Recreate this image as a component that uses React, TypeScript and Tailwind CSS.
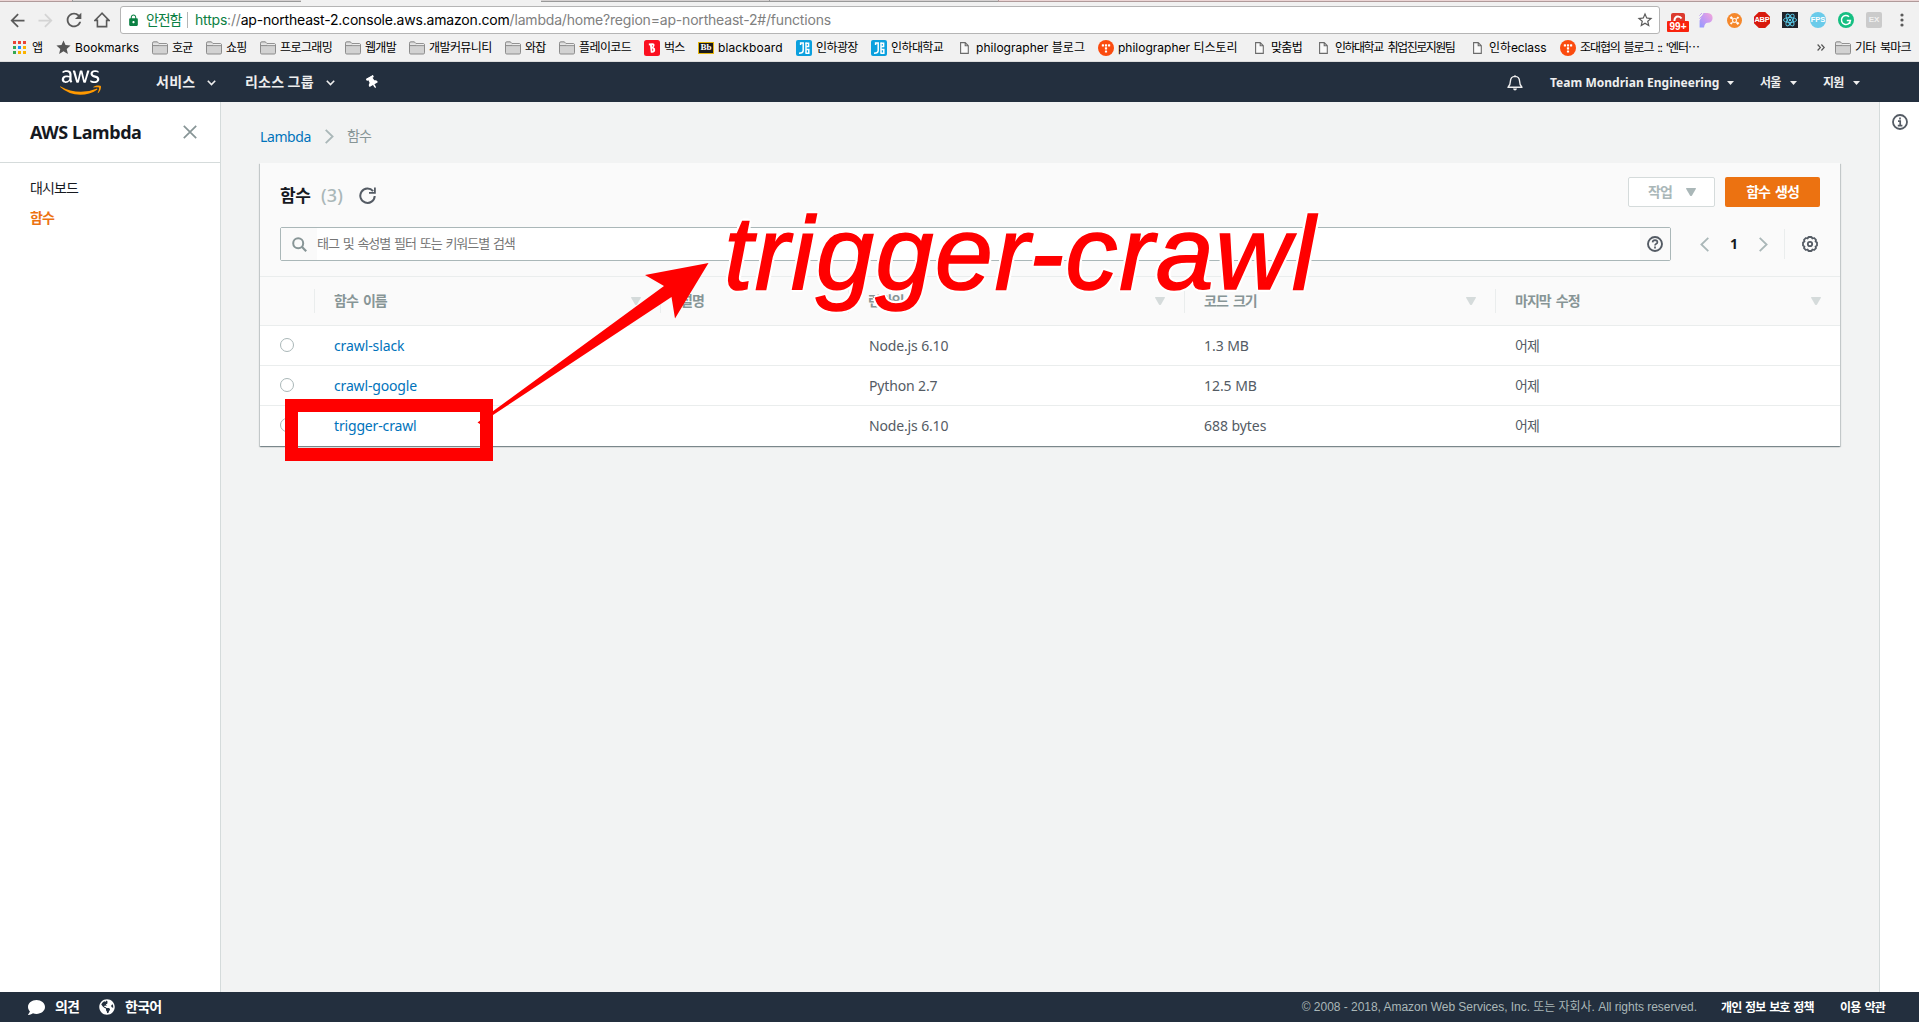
import type { ReactNode } from "react";
import { MdArrowBack, MdArrowForward, MdRefresh, MdStarBorder, MdStar, MdLock } from "react-icons/md";
import { FaAws, FaThumbtack, FaComment, FaGlobeAmericas } from "react-icons/fa";

const KR = "font-['Noto_Sans_CJK_KR',sans-serif]";
const UI = "font-['Inter','Noto_Sans_CJK_KR',sans-serif]";
const CONSOLE = "font-['Noto_Sans','Noto_Sans_CJK_KR',sans-serif]";

/* ---------- small icons ---------- */

const FolderIcon = () => (
  <svg className="h-[14px] w-4 shrink-0" viewBox="0 0 16 14">
    <path d="M.5 2.2Q.5.8 1.8.8H5.4L6.8 2.6H14.2Q15.5 2.6 15.5 3.9V11.8Q15.5 13 14.3 13H1.7Q.5 13 .5 11.8Z" fill="#d2d2d2" stroke="#8c8c8c" />
    <path d="M1 4.6H15" stroke="#8c8c8c" />
    <path d="M1 3.1H6.6L7.3 3.6H15" stroke="#f1f1f1" fill="none" />
  </svg>
);

const PageIcon = () => (
  <svg className="h-3 w-[9px] shrink-0" viewBox="0 0 9 12">
    <path d="M.6.6H5.2L8.3 3.7V11.4H.6ZM5.2.6V3.7H8.3" fill="#fafafa" stroke="#6b6b6b" strokeWidth="1.1" />
  </svg>
);

const TistoryIcon = () => (
  <svg className="size-4 shrink-0" viewBox="0 0 16 16">
    <circle cx="8" cy="8" r="8" fill="#fb4b0f" />
    <g fill="#fff">
      <rect x="3.8" y="4.2" width="2.2" height="2.2" rx=".5" />
      <rect x="6.9" y="4.2" width="2.2" height="2.2" rx=".5" />
      <rect x="10" y="4.2" width="2.2" height="2.2" rx=".5" />
      <rect x="6.9" y="7.3" width="2.2" height="2.2" rx=".5" />
      <rect x="6.9" y="10.4" width="2.2" height="2.2" rx=".5" />
    </g>
  </svg>
);

const BugsIcon = () => (
  <svg className="size-4 shrink-0" viewBox="0 0 16 16">
    <rect width="16" height="16" rx="2.5" fill="#fb1020" />
    <path d="M4.8 3.6L8.4 3.3Q10.8 3.3 10.5 5.6Q10.4 6.9 9.5 7.3Q11.4 7.8 11.2 10Q11 12.8 8.2 12.8L6.8 12.8L6 5.4L4.9 5.3ZM8 5V6.8Q8.8 6.6 8.8 5.8Q8.8 5 8 5ZM8.2 8.6L8.5 11.2Q9.3 11 9.3 9.8Q9.2 8.6 8.2 8.6Z" fill="#fff" fillRule="evenodd" />
  </svg>
);

const BbIcon = () => (
  <span className="flex h-3 w-4 shrink-0 items-center justify-center border border-[#e5b70c] bg-[#1a1a1a] font-['Liberation_Serif',serif] text-[9px] leading-none font-bold text-white">Bb</span>
);

const InhaIcon = () => (
  <svg className="size-4 shrink-0" viewBox="0 0 16 16">
    <rect width="16" height="16" rx="2" fill="#0ba0de" />
    <g fill="none" stroke="#fff" strokeWidth="1.5">
      <path d="M4.6 5V3H7.2V10.6Q7 13.2 3 13.2" />
      <path d="M9.6 3.2H12.6V6.6H10.2M10.2 9.4H12.8V13.2H9.6" />
      <path d="M10 2.6V13.6" />
    </g>
  </svg>
);

const AppsIcon = () => (
  <svg className="size-[13px] shrink-0" viewBox="0 0 13 13">
    <path d="M0 0h3v3H0zM5 0h3v3H5zM10 0h3v3h-3z" fill="#ea4335" />
    <path d="M0 5h3v3H0zM0 10h3v3H0z" fill="#34a853" />
    <path d="M5 5h3v3H5z" fill="#1a8cff" />
    <path d="M10 5h3v3h-3zM5 10h3v3H5zM10 10h3v3h-3z" fill="#fbb300" />
  </svg>
);

const Triangle = ({ className }: { className: string }) => (
  <svg className={`h-2 w-[10px] shrink-0 ${className}`} viewBox="0 0 10 8">
    <path d="M.3 0H9.7Q10 .4 9.8 1L6 7.4Q5 8.6 4 7.4L.2 1Q0 .4.3 0Z" fill="currentColor" />
  </svg>
);

const NavChevron = () => (
  <svg className="mt-px h-[6px] w-[9px] shrink-0" viewBox="0 0 9 6">
    <path d="M.8.8L4.5 4.6L8.2.8" fill="none" stroke="#eee" strokeWidth="1.6" />
  </svg>
);

const Caret = () => (
  <svg className="mt-px h-1 w-[7px] shrink-0" viewBox="0 0 7 4">
    <path d="M0 0H7L3.5 4Z" fill="#eee" />
  </svg>
);

/* ---------- browser chrome ---------- */

function TabEdge() {
  return (
    <div className="flex h-[2px]">
      <div className="w-[72px] border-b border-[#b09a9a] bg-[#ecd6d6]" />
      <div className="w-[229px] border-b border-l border-[#999] bg-[#d6d2d2]" />
      <div className="w-[240px] bg-[#f1f1f1]" />
      <div className="w-[228px] border-b border-[#999] bg-[#d6d2d2]" />
      <div className="w-[229px] border-b border-l border-[#999] bg-[#d6d2d2]" />
      <div className="flex-1 border-b border-l border-[#b09a9a] bg-[#ecd6d6]" />
    </div>
  );
}

function Extensions() {
  return (
    <div className="flex flex-1 items-center pl-[7px]">
      <div className="relative h-5 w-[22px]">
        <svg className="absolute top-[3px] left-[4px] size-[14px]" viewBox="0 0 14 14">
          <rect width="14" height="14" rx="2" fill="#dc3a2e" />
          <path d="M10.5 5.4Q9.4 3.4 7 3.4Q3.6 3.4 3.4 8" fill="none" stroke="#fff" strokeWidth="2" />
        </svg>
        <span className="absolute top-[11px] left-0 flex h-[11px] w-[22px] items-center justify-center rounded-[1px] bg-[#f9230d] font-['Liberation_Sans',sans-serif] text-[10px] leading-none font-bold text-white">99+</span>
      </div>
      <svg className="ml-[10px] h-4 w-[14px]" viewBox="0 0 14 16">
        <defs>
          <linearGradient id="pf" x1="0" y1="1" x2="1" y2="0">
            <stop offset="0" stopColor="#8f9bff" />
            <stop offset=".5" stopColor="#c79af2" />
            <stop offset="1" stopColor="#f6a6d8" />
          </linearGradient>
        </defs>
        <path d="M4.5 1H8.5Q13.6 1.4 13.6 6Q13.4 10.6 8.6 10.8Q5.6 11 5 15.4L.6 15.6V8.500Z" fill="url(#pf)" />
        <path d="M.4 3.6L3 1M.4 6.6L6 1" stroke="#c3a5f3" strokeWidth="1" />
      </svg>
      <svg className="ml-[14px] size-[15px]" viewBox="0 0 16 16">
        <circle cx="8" cy="8" r="8" fill="#f5882c" />
        <g stroke="#fff" strokeWidth="1" fill="#fff">
          <path d="M4.6 5L11.4 11M4.5 11L11.6 5" fill="none" />
          <circle cx="8" cy="8" r="2.2" />
          <circle cx="4.6" cy="5" r="1" />
          <circle cx="11.4" cy="11" r="1" />
          <circle cx="11.6" cy="5" r=".7" />
          <circle cx="4.5" cy="11" r=".7" />
        </g>
        <circle cx="8" cy="8" r="1.5" fill="#f5882c" />
      </svg>
      <span className="ml-[12px] flex size-4 items-center justify-center bg-[#d81a0d] font-['Liberation_Sans',sans-serif] text-[7.5px] leading-none font-bold tracking-[-0.2px] text-white [clip-path:polygon(30%_0,70%_0,100%_30%,100%_70%,70%_100%,30%_100%,0_70%,0_30%)]">ABP</span>
      <svg className="ml-[12px] size-4" viewBox="0 0 16 16">
        <rect width="16" height="16" fill="#20232a" />
        <g fill="none" stroke="#5ccfee" strokeWidth=".9">
          <ellipse cx="8" cy="8" rx="6.6" ry="2.5" />
          <ellipse cx="8" cy="8" rx="6.6" ry="2.5" transform="rotate(60 8 8)" />
          <ellipse cx="8" cy="8" rx="6.6" ry="2.5" transform="rotate(120 8 8)" />
        </g>
        <circle cx="8" cy="8" r="1.2" fill="#5ccfee" />
      </svg>
      <span className="ml-[12px] flex size-4 items-center justify-center rounded-full bg-[#6acbea] font-['Liberation_Sans',sans-serif] text-[7.5px] leading-none font-bold text-white">FPS</span>
      <svg className="ml-[12px] size-4" viewBox="0 0 16 16">
        <circle cx="8" cy="8" r="8" fill="#15bf82" />
        <path d="M11 4.7A4.5 4.5 0 1 0 12.4 8.6H8.8M12.3 8.4L11.6 11.8" fill="none" stroke="#fff" strokeWidth="1.5" />
      </svg>
      <span className="ml-[12px] flex size-4 items-center justify-center rounded-[2px] bg-[#cbcbcb] font-['Liberation_Sans',sans-serif] text-[8px] leading-none font-bold text-[#f1f1f1]">EX</span>
      <svg className="ml-[18px] h-[14px] w-1" viewBox="0 0 4 14">
        <g fill="#5a5a5a">
          <circle cx="2" cy="2" r="1.6" />
          <circle cx="2" cy="7" r="1.6" />
          <circle cx="2" cy="12" r="1.6" />
        </g>
      </svg>
    </div>
  );
}

function AddressRow() {
  return (
    <div className="flex h-9 items-center">
      <MdArrowBack className="ml-[7px] size-[21px] text-[#5a5a5a]" />
      <MdArrowForward className="ml-[7px] size-[21px] text-[#d4d4d4]" />
      <MdRefresh className="ml-[7px] size-[22px] text-[#5a5a5a]" />
      <svg className="ml-[9px] size-4" viewBox="0 0 16 16">
        <path d="M8 1.2L1 8.4H3.4V14.6H12.6V8.4H15Z" fill="none" stroke="#5a5a5a" strokeWidth="1.6" />
      </svg>
      <div className={`ml-[10px] flex h-7 w-[1540px] items-center rounded-[3px] border border-[#b5b5b5] bg-white text-[14px] ${UI}`}>
        <MdLock className="ml-[6px] size-[13px] text-[#0b8043]" />
        <span className="ml-[6px] w-[36px] pb-[2px] text-[14px] tracking-[-1.1px] whitespace-nowrap text-[#0b8043]">안전함</span>
        <span className="ml-[5px] h-4 w-px bg-[#b5b5b5]" />
        <span className="ml-[7px] pb-px tracking-[-0.19px] whitespace-nowrap text-[#808080]">
          <span className="text-[#0b8043]">https</span>://<span className="text-black">ap-northeast-2.console.aws.amazon.com</span>/lambda/home?region=ap-northeast-2#/functions
        </span>
        <MdStarBorder className="mr-[5px] ml-auto size-[18px] text-[#5a5a5a]" />
      </div>
      <Extensions />
    </div>
  );
}

/* Each bookmark is as wide as the step to the next one. */
const bookmarks: { w: string; gap: string; icon: ReactNode; text: string; track: string }[] = [
  { w: "w-[43px]", gap: "gap-[6px]", icon: <AppsIcon />, text: "앱", track: "tracking-[-0.7px]" },
  { w: "w-[96px]", gap: "gap-[3px]", icon: <MdStar className="-ml-px size-[17px] shrink-0 text-[#555]" />, text: "Bookmarks", track: "tracking-[0.05px]" },
  { w: "w-[54px]", gap: "gap-1", icon: <FolderIcon />, text: "호균", track: "tracking-[-0.7px]" },
  { w: "w-[54px]", gap: "gap-1", icon: <FolderIcon />, text: "쇼핑", track: "tracking-[-0.7px]" },
  { w: "w-[85px]", gap: "gap-1", icon: <FolderIcon />, text: "프로그래밍", track: "tracking-[-0.6px]" },
  { w: "w-[64px]", gap: "gap-1", icon: <FolderIcon />, text: "웹개발", track: "tracking-[-0.7px]" },
  { w: "w-[96px]", gap: "gap-1", icon: <FolderIcon />, text: "개발커뮤니티", track: "tracking-[-0.6px]" },
  { w: "w-[54px]", gap: "gap-1", icon: <FolderIcon />, text: "와잡", track: "tracking-[-0.7px]" },
  { w: "w-[85px]", gap: "gap-1", icon: <FolderIcon />, text: "플레이코드", track: "tracking-[-0.6px]" },
  { w: "w-[54px]", gap: "gap-1", icon: <BugsIcon />, text: "벅스", track: "tracking-[-0.7px]" },
  { w: "w-[98px]", gap: "gap-1", icon: <BbIcon />, text: "blackboard", track: "tracking-[0.12px]" },
  { w: "w-[75px]", gap: "gap-1", icon: <InhaIcon />, text: "인하광장", track: "tracking-[-0.6px]" },
  { w: "w-[89px]", gap: "gap-1", icon: <InhaIcon />, text: "인하대학교", track: "tracking-[-0.6px]" },
  { w: "w-[138px]", gap: "gap-[7px]", icon: <PageIcon />, text: "philographer 블로그", track: "tracking-[0.03px]" },
  { w: "w-[157px]", gap: "gap-1", icon: <TistoryIcon />, text: "philographer 티스토리", track: "tracking-[0px]" },
  { w: "w-[64px]", gap: "gap-[7px]", icon: <PageIcon />, text: "맞춤법", track: "tracking-[-0.7px]" },
  { w: "w-[154px]", gap: "gap-[7px]", icon: <PageIcon />, text: "인하대학교 취업진로지원팀", track: "tracking-[-1.5px] [word-spacing:3px]" },
  { w: "w-[87px]", gap: "gap-[7px]", icon: <PageIcon />, text: "인하eclass", track: "tracking-[-0.1px]" },
  { w: "w-[138px]", gap: "gap-1", icon: <TistoryIcon />, text: "조대협의 블로그 :: '엔터⋯", track: "tracking-[-1.1px] [word-spacing:1.5px]" },
];

function BookmarksBar() {
  return (
    <div className={`flex h-[19px] items-center pl-[13px] text-[12px] text-black ${UI}`}>
      {bookmarks.map((b) => (
        <div key={b.text} className={`flex shrink-0 items-center whitespace-nowrap ${b.w} ${b.gap}`}>
          {b.icon}
          <span className={b.track}>{b.text}</span>
        </div>
      ))}
      <svg className="mr-[10px] ml-auto h-[7px] w-[8px]" viewBox="0 0 8 7">
        <path d="M.6.5L3.4 3.5L.6 6.5M4.4.5L7.2 3.5L4.4 6.5" fill="none" stroke="#555" strokeWidth="1.2" />
      </svg>
      <div className="flex w-[84px] items-center gap-1 whitespace-nowrap">
        <FolderIcon />
        <span className="tracking-[-0.8px] [word-spacing:2px]">기타 북마크</span>
      </div>
    </div>
  );
}

/* ---------- AWS console ---------- */

function TopNav() {
  return (
    <nav className={`flex h-10 items-center bg-[#232f3e] text-[#eee] ${KR}`}>
      <div className="relative ml-[60px] h-[33px] w-[41px]">
        <FaAws className="h-[33px] w-[41px] text-white [clip-path:inset(0_0_41%_0)]" />
        <FaAws className="absolute inset-0 h-[33px] w-[41px] text-[#f90] [clip-path:inset(59%_0_0_0)]" />
      </div>
      <span className="ml-[55px] w-[51px] pb-px text-[14px] font-bold tracking-[0.3px] whitespace-nowrap">서비스</span>
      <NavChevron />
      <span className="ml-[29px] w-[81px] pb-px text-[14px] font-bold tracking-[0.2px] whitespace-nowrap">리소스 그룹</span>
      <NavChevron />
      <FaThumbtack className="ml-[31px] size-[13px] -rotate-[30deg] text-white" />
      <svg className="mr-[27px] ml-auto h-[17px] w-4" viewBox="0 0 16 17">
        <path d="M8 1.2V2.4M1 13.2H15Q12.6 11.2 12.6 7.2Q12.4 2.6 8 2.4Q3.6 2.6 3.4 7.2Q3.4 11.2 1 13.2Z" fill="none" stroke="#eee" strokeWidth="1.4" strokeLinejoin="round" />
        <path d="M6 14.4H10Q9.6 16.4 8 16.4Q6.4 16.4 6 14.4Z" fill="#eee" />
      </svg>
      <span className={`w-[177px] pt-px text-[12px] font-bold tracking-[0.03px] whitespace-nowrap ${CONSOLE}`}>Team Mondrian Engineering</span>
      <Caret />
      <span className="ml-[26px] w-[30px] text-[12px] font-bold tracking-[-0.8px] whitespace-nowrap">서울</span>
      <Caret />
      <span className="ml-[26px] w-[30px] text-[12px] font-bold tracking-[-0.8px] whitespace-nowrap">지원</span>
      <Caret />
      <span className="w-[59px]" />
    </nav>
  );
}

function Sidebar() {
  return (
    <aside className="w-[221px] shrink-0 border-r border-[#d5dbdb] bg-white text-[#16191f]">
      <div className="flex h-[61px] items-center border-b border-[#d5dbdb] pl-[30px]">
        <span className="w-[153px] text-[18px] font-bold tracking-[-0.42px] whitespace-nowrap">AWS Lambda</span>
        <svg className="size-[14px]" viewBox="0 0 14 14">
          <path d="M.8.8L13.2 13.2M13.2.8L.8 13.2" stroke="#879596" strokeWidth="1.7" />
        </svg>
      </div>
      <ul className={`flex flex-col pt-[9px] pl-[30px] text-[14px] ${KR}`}>
        <li className="flex h-[30px] items-center tracking-[-0.9px]">대시보드</li>
        <li className="flex h-[30px] items-center font-bold tracking-[-1px] text-[#ec7211]">함수</li>
      </ul>
    </aside>
  );
}

const rows = [
  { name: "crawl-slack", track: "tracking-[-0.1px]", runtime: "Node.js 6.10", size: "1.3 MB" },
  { name: "crawl-google", track: "tracking-[-0.16px]", runtime: "Python 2.7", size: "12.5 MB" },
  { name: "trigger-crawl", track: "tracking-[-0.16px]", runtime: "Node.js 6.10", size: "688 bytes" },
];

const COLS = "grid grid-cols-[54px_346px_188px_336px_311px_1fr] items-center";

const HeadCell = ({ children, sort = true }: { children: ReactNode; sort?: boolean }) => (
  <div className="flex h-6 items-center border-l border-[#eaeded] pl-[19px]">
    <span className="pb-[2px]">{children}</span>
    {sort && <Triangle className="mr-[19px] ml-auto text-[#d5dbdb]" />}
  </div>
);

function FunctionsCard() {
  return (
    <section className="w-[1580px] bg-white shadow-[0_1px_1px_0_rgba(0,28,36,0.3),1px_1px_1px_0_rgba(0,28,36,0.15),-1px_1px_1px_0_rgba(0,28,36,0.15)]">
      <div className="h-[114px] border-b border-[#eaeded] bg-[#fafafa] px-5 pt-[14px]">
        <div className="flex h-[30px]">
          <div className="flex items-center pt-[6px]">
            <h2 className={`w-[41px] pb-px text-[17px] leading-none font-bold tracking-[-0.4px] text-[#16191f] ${KR}`}>함수</h2>
            <span className="w-[38px] text-[18px] leading-none font-medium tracking-[0.2px] text-[#aab7b8]">(3)</span>
            <svg className="size-[17px]" viewBox="0 0 17 17">
              <path d="M14.1 4.2A7.2 7.2 0 1 0 15.7 9" fill="none" stroke="#545b64" strokeWidth="2" />
              <path d="M15.9.4V5.9H10" fill="none" stroke="#545b64" strokeWidth="1.8" />
            </svg>
          </div>
          <button className={`ml-auto flex h-[30px] w-[87px] items-center justify-between rounded-[2px] border border-[#d5dbdb] bg-white pr-[18px] pl-[19px] text-[14px] font-bold tracking-[-1px] text-[#aab7b8] ${KR}`}>
            <span className="pb-[2px]">작업</span>
            <Triangle className="text-[#aab7b8]" />
          </button>
          <button className={`ml-[10px] h-[30px] w-[95px] rounded-[2px] bg-[#ec7211] pb-[3px] text-[14px] leading-none font-bold tracking-[-1px] text-white [word-spacing:3px] ${KR}`}>함수 생성</button>
        </div>
        <div className="mt-5 flex h-[34px] items-center">
          <div className="flex h-[34px] w-[1391px] items-center rounded-[2px] border border-[#aab7b8] bg-white">
            <div className="flex h-full w-[36px] items-center bg-[#fafafa] pl-[11px]">
              <svg className="size-[15px]" viewBox="0 0 15 15">
                <circle cx="6.2" cy="6.2" r="5" fill="none" stroke="#879596" strokeWidth="2" />
                <path d="M9.8 9.8L14.2 14.2" stroke="#879596" strokeWidth="2.2" />
              </svg>
            </div>
            <span className={`pb-[2px] text-[13px] tracking-[-1.05px] text-[#757575] [word-spacing:2px] ${KR}`}>태그 및 속성별 필터 또는 키워드별 검색</span>
            <div className="ml-auto flex h-full w-[30px] items-center bg-[#fafafa] pl-[7px]">
              <svg className="size-4" viewBox="0 0 16 16">
                <circle cx="8" cy="8" r="7" fill="none" stroke="#545b64" strokeWidth="1.9" />
                <path d="M5.6 6.4Q5.7 4.2 8 4.2Q10.4 4.3 10.4 6.2Q10.4 7.3 9 7.9Q8 8.4 8 9.6M8 10.6V12.4" fill="none" stroke="#545b64" strokeWidth="1.7" />
              </svg>
            </div>
          </div>
          <svg className="ml-[29px] h-[15px] w-[9px]" viewBox="0 0 9 15">
            <path d="M8.3.8L1.4 7.5L8.3 14.2" fill="none" stroke="#aab7b8" strokeWidth="1.8" />
          </svg>
          <span className="w-[50px] pb-px text-center text-[14px] font-bold text-[#16191f]">1</span>
          <svg className="h-[15px] w-[9px]" viewBox="0 0 9 15">
            <path d="M.7.8L7.6 7.5L.7 14.2" fill="none" stroke="#aab7b8" strokeWidth="1.8" />
          </svg>
          <span className="ml-4 h-[30px] w-px bg-[#eaeded]" />
          <svg className="ml-[17px] size-4" viewBox="0 0 16 16">
            <path d="M6.5 1H9.5L10.4 2.5L12.2 2L14 3.9L13.5 5.6L15 6.5V9.5L13.5 10.4L14 12.1L12.2 14L10.4 13.5L9.5 15H6.5L5.6 13.5L3.8 14L2 12.1L2.5 10.4L1 9.5V6.5L2.5 5.6L2 3.9L3.8 2L5.6 2.5Z" fill="none" stroke="#545b64" strokeWidth="1.8" strokeLinejoin="round" />
            <circle cx="8" cy="8" r="2.2" fill="none" stroke="#545b64" strokeWidth="1.8" />
          </svg>
        </div>
      </div>

      <div className={`${COLS} h-[49px] border-b border-[#eaeded] bg-[#fafafa] text-[14px] font-bold tracking-[-1px] text-[#879596] [word-spacing:3px] ${KR}`}>
        <div />
        <HeadCell>함수 이름</HeadCell>
        <HeadCell sort={false}>설명</HeadCell>
        <HeadCell>런타임</HeadCell>
        <HeadCell>코드 크기</HeadCell>
        <HeadCell>마지막 수정</HeadCell>
      </div>

      {rows.map((r) => (
        <div key={r.name} className={`${COLS} h-10 border-b border-[#eaeded] text-[14px] text-[#545b64] last:border-transparent`}>
          <div className="pb-px pl-5">
            <div className="size-[14px] rounded-full border border-[#aab7b8] bg-white" />
          </div>
          <div className={`pl-[20px] text-[#0073bb] ${r.track}`}>{r.name}</div>
          <div />
          <div className="pl-[21px] tracking-[-0.15px]">{r.runtime}</div>
          <div className="pl-[20px] tracking-[-0.05px]">{r.size}</div>
          <div className={`pb-px pl-[20px] tracking-[-1px] ${KR}`}>어제</div>
        </div>
      ))}
    </section>
  );
}

function Footer() {
  return (
    <footer className={`flex h-[30px] items-center bg-[#232f3e] text-white ${KR}`}>
      <FaComment className="ml-7 size-[17px]" />
      <span className="ml-[10px] w-[44px] pb-[2px] text-[14px] font-bold tracking-[-0.8px]">의견</span>
      <FaGlobeAmericas className="size-4" />
      <span className="ml-[10px] pb-[2px] text-[14px] font-bold tracking-[-0.7px]">한국어</span>
      <span className="mr-6 ml-auto font-['Liberation_Sans','Noto_Sans_CJK_KR',sans-serif] text-[12px] tracking-[-0.03px] whitespace-nowrap text-[#aab7b8]">
        © 2008 - 2018, Amazon Web Services, Inc. 또는 자회사. All rights reserved.
      </span>
      <span className="w-[119px] pb-px text-[12px] font-bold tracking-[-0.9px] whitespace-nowrap [word-spacing:2px]">개인 정보 보호 정책</span>
      <span className="w-[79px] pb-px text-[12px] font-bold tracking-[-0.8px] whitespace-nowrap [word-spacing:2px]">이용 약관</span>
    </footer>
  );
}

/* Red highlight box, arrow and enlarged caption drawn over the page. */
function Annotation() {
  return (
    <div className="pointer-events-none absolute inset-0 overflow-hidden">
      <div className="absolute top-[399px] left-[285px] h-[62px] w-[208px] border-[13px] border-[#f00]" />
      <svg className="absolute top-[255px] left-[470px] h-[175px] w-[245px]" viewBox="470 255 245 175">
        <path d="M708.5 263L675 318.5L671.5 297L493 415L480 424L477.500 422.500L664 286L645 275Z" fill="#f00" />
      </svg>
      <div className="absolute top-[191px] left-[724px] font-['Liberation_Sans',sans-serif] text-[104px] leading-[124px] tracking-[1.75px] whitespace-nowrap text-[#f00] italic [-webkit-text-stroke:1.6px_#f00] [text-shadow:3px_0_#fff,-3px_0_#fff,0_3px_#fff,0_-3px_#fff,2px_2px_#fff,-2px_2px_#fff,2px_-2px_#fff,-2px_-2px_#fff]">
        trigger-crawl
      </div>
    </div>
  );
}

export default function App() {
  return (
    <div className="relative flex h-[1022px] w-[1919px] flex-col overflow-hidden bg-[#f2f3f3]">
      <header className="h-[62px] shrink-0 border-b border-[#dcdcdc] bg-[#f1f1f1]">
        <TabEdge />
        <AddressRow />
        <BookmarksBar />
      </header>
      <TopNav />
      <div className={`flex flex-1 ${CONSOLE}`}>
        <Sidebar />
        <main className="flex-1 bg-[#f2f3f3] pt-[23px] pl-[39px]">
          <div className="mb-[16px] flex h-[22px] items-center text-[14px]">
            <span className="w-[65px] tracking-[-0.4px] text-[#0073bb]">Lambda</span>
            <svg className="h-[15px] w-[9px]" viewBox="0 0 9 15">
              <path d="M.7.8L7.6 7.5L.7 14.2" fill="none" stroke="#aab7b8" strokeWidth="1.8" />
            </svg>
            <span className={`ml-[13px] pb-px tracking-[-1px] text-[#879596] ${KR}`}>함수</span>
          </div>
          <FunctionsCard />
        </main>
        <aside className="w-10 border-l border-[#d5dbdb] bg-white pt-[12px] pl-[12px]">
          <svg className="size-4" viewBox="0 0 16 16">
            <circle cx="8" cy="8" r="7" fill="none" stroke="#545b64" strokeWidth="1.8" />
            <path d="M8 3.6V5.4M6 7.2H8.2V11.4M5.8 11.6H10.4" fill="none" stroke="#545b64" strokeWidth="1.7" />
          </svg>
        </aside>
      </div>
      <Footer />
      <Annotation />
    </div>
  );
}
